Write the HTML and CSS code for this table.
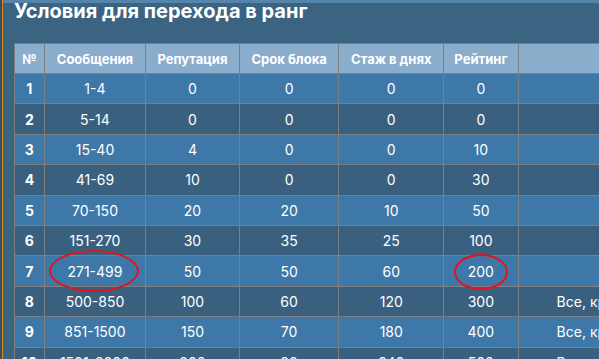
FILE: index.html
```html
<!DOCTYPE html>
<html lang="ru">
<head>
<meta charset="utf-8">
<link rel="stylesheet" href="styles.css">
</head>
<body>
<div class="page">
  <div class="rail"></div>
  <main class="panel">
    <h1 class="title">Условия для перехода в ранг</h1>
    <div class="table-wrap">
      <table class="ranks">
        <thead>
          <tr>
            <th class="c-num">№</th>
            <th class="c-msg">Сообщения</th>
            <th class="c-rep">Репутация</th>
            <th class="c-blk">Срок блока</th>
            <th class="c-days">Стаж в днях</th>
            <th class="c-rate">Рейтинг</th>
            <th class="c-extra"></th>
          </tr>
        </thead>
        <tbody>
          <tr><th>1</th><td>1-4</td><td>0</td><td>0</td><td>0</td><td>0</td><td class="extra"></td></tr>
          <tr><th>2</th><td>5-14</td><td>0</td><td>0</td><td>0</td><td>0</td><td class="extra"></td></tr>
          <tr><th>3</th><td>15-40</td><td>4</td><td>0</td><td>0</td><td>10</td><td class="extra"></td></tr>
          <tr><th>4</th><td>41-69</td><td>10</td><td>0</td><td>0</td><td>30</td><td class="extra"></td></tr>
          <tr><th>5</th><td>70-150</td><td>20</td><td>20</td><td>10</td><td>50</td><td class="extra"></td></tr>
          <tr><th>6</th><td>151-270</td><td>30</td><td>35</td><td>25</td><td>100</td><td class="extra"></td></tr>
          <tr><th>7</th><td><span class="circled wide">271-499</span></td><td>50</td><td>50</td><td>60</td><td><span class="circled narrow">200</span></td><td class="extra"></td></tr>
          <tr><th>8</th><td>500-850</td><td>100</td><td>60</td><td>120</td><td>300</td><td class="extra">Все, кроме</td></tr>
          <tr><th>9</th><td>851-1500</td><td>150</td><td>70</td><td>180</td><td>400</td><td class="extra">Все, кроме</td></tr>
          <tr><th>10</th><td>1501-3000</td><td>200</td><td>80</td><td>240</td><td>500</td><td class="extra">Все, кроме</td></tr>
        </tbody>
      </table>
    </div>
  </main>
</div>
</body>
</html>
```

FILE: styles.css
```css
html, body {
  margin: 0;
  padding: 0;
  background: #3a6080;
  overflow: hidden;
}
.page {
  display: flex;
  width: 599px;
  height: 359px;
  overflow: hidden;
  font-family: Inter, "Noto Sans", sans-serif;
  color: #ffffff;
}
.rail {
  width: 2px;
  flex: none;
  background: #2f4e68;
  border-right: 1px solid #d98a1e;
}
.panel {
  flex: 1;
  min-width: 0;
  background: #3b6382;
  border-top: 3px solid #5685ab;
  padding-left: 11px;
  overflow: hidden;
}
.title {
  margin: 0;
  font-size: 20px;
  font-weight: 700;
  line-height: 16px;
  height: 40px;
}
.table-wrap {
  width: 700px;
}
.ranks {
  border-collapse: collapse;
  table-layout: fixed;
  font-size: 14px;
}
.ranks tr {
  height: 30.4px;
}
.ranks thead tr {
  height: 30px;
}
.ranks th,
.ranks td {
  border: 1px solid #7e7e7e;
  padding: 0;
  text-align: center;
  vertical-align: middle;
}
.ranks thead th {
  background: #8aadcb;
  font-size: 13px;
  font-weight: 700;
}
.ranks tbody th {
  font-weight: 700;
}
.ranks tbody tr:nth-child(odd) {
  background: #3e78a8;
}
.ranks tbody tr:nth-child(even) {
  background: #3a6080;
}
.c-num { width: 29px; }
.c-msg { width: 101px; }
.c-rep { width: 93px; }
.c-blk { width: 100px; }
.c-days { width: 105px; }
.c-rate { width: 74px; }
.c-extra { width: 196px; }
.ranks td.extra {
  text-align: left;
  padding-left: 38px;
  white-space: nowrap;
}
.circled {
  position: relative;
  display: inline-block;
}
.circled::after {
  content: "";
  position: absolute;
  border: 2.5px solid #e3131b;
  border-radius: 50%;
}
.circled.wide::after {
  left: -18px;
  right: -17px;
  top: -13px;
  bottom: -12px;
}
.circled.narrow::after {
  left: -14px;
  right: -14px;
  top: -9px;
  bottom: -10px;
}
```
